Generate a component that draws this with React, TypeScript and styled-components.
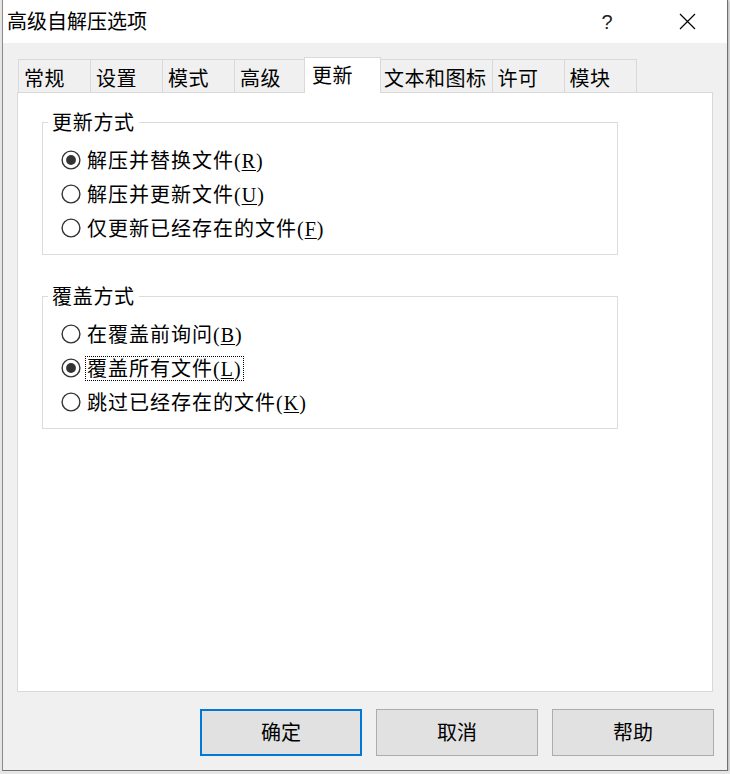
import styled, { createGlobalStyle } from 'styled-components';

const GlobalStyle = createGlobalStyle`
  body {
    margin: 0;
    background: #e6e6e6;
    font-family: 'Noto Sans CJK SC', 'Noto Sans', sans-serif;
    color: #000;
  }
`;

const tabs = ['常规', '设置', '模式', '高级', '更新', '文本和图标', '许可', '模块'];
const activeTab = '更新';

type Option = { text: string; key: string; checked?: boolean; focused?: boolean };

const groups: { title: string; options: Option[] }[] = [
  {
    title: '更新方式',
    options: [
      { text: '解压并替换文件', key: 'R', checked: true },
      { text: '解压并更新文件', key: 'U' },
      { text: '仅更新已经存在的文件', key: 'F' },
    ],
  },
  {
    title: '覆盖方式',
    options: [
      { text: '在覆盖前询问', key: 'B' },
      { text: '覆盖所有文件', key: 'L', checked: true, focused: true },
      { text: '跳过已经存在的文件', key: 'K' },
    ],
  },
];

const RadioMark = ({ checked }: { checked?: boolean }) => (
  <RadioSvg viewBox="0 0 20 20" width="20" height="20">
    <circle cx="10" cy="10" r="8.9" fill="#fff" stroke="#333" strokeWidth="1.4" />
    {checked && <circle cx="10" cy="10" r="4.9" fill="#333" />}
  </RadioSvg>
);

const App = () => {
  return (
    <>
      <GlobalStyle />
      <Window>
        <TitleBar>
          <Title>高级自解压选项</Title>
          <CaptionButton>
            <Help>?</Help>
          </CaptionButton>
          <CaptionButton>
            <svg width="17" height="17" viewBox="0 0 17 17">
              <path d="M1 1 L16 16 M16 1 L1 16" stroke="#000" strokeWidth="1.2" fill="none" />
            </svg>
          </CaptionButton>
        </TitleBar>
        <Body>
          <TabStrip>
            {tabs.map((t) => (
              <Tab key={t} $active={t === activeTab}>
                {t}
              </Tab>
            ))}
          </TabStrip>
          <Panel>
            {groups.map((g) => (
              <Group key={g.title}>
                <Legend>{g.title}</Legend>
                <RadioList>
                  {g.options.map((o) => (
                    <RadioRow key={o.key}>
                      <RadioMark checked={o.checked} />
                      <RadioLabel $focused={o.focused}>
                        {o.text}
                        <Latin>
                          (<u>{o.key}</u>)
                        </Latin>
                      </RadioLabel>
                    </RadioRow>
                  ))}
                </RadioList>
              </Group>
            ))}
          </Panel>
          <ButtonRow>
            <Button $default>确定</Button>
            <Button>取消</Button>
            <Button>帮助</Button>
          </ButtonRow>
        </Body>
      </Window>
    </>
  );
};

const Window = styled.div`
  box-sizing: border-box;
  width: 726px;
  height: 771px;
  margin-left: 2px;
  border: 1px solid #8c8c8c;
  border-top: none;
  border-right-color: #6f6f6f;
  border-bottom-color: #6f6f6f;
  background: #f0f0f0;
  display: flex;
  flex-direction: column;
  box-shadow: 1px 1px 2px rgba(0, 0, 0, 0.2);
`;

const TitleBar = styled.div`
  height: 43px;
  background: #fff;
  display: flex;
  align-items: center;
`;

const Title = styled.div`
  flex: 1;
  padding-left: 4px;
  font-size: 20px;
  line-height: 24px;
  padding-bottom: 1px;
`;

const CaptionButton = styled.div`
  width: 80px;
  height: 43px;
  display: flex;
  align-items: center;
  justify-content: center;
`;

const Help = styled.span`
  font-family: 'Liberation Sans', Arial, sans-serif;
  font-size: 20px;
  line-height: 20px;
  color: #222;
`;

const Body = styled.div`
  flex: 1;
  display: flex;
  flex-direction: column;
  padding: 14px 11px 14px 14px;
`;

const TabStrip = styled.div`
  display: flex;
  align-items: flex-end;
  height: 35px;
  padding-left: 1px;
`;

const Tab = styled.div<{ $active?: boolean }>`
  box-sizing: border-box;
  min-width: ${({ $active }) => ($active ? '77px' : '73px')};
  height: ${({ $active }) => ($active ? '36px' : '33px')};
  margin-left: ${({ $active }) => ($active ? '-3px' : '-1px')};
  margin-right: ${({ $active }) => ($active ? '-2px' : '0')};
  margin-bottom: ${({ $active }) => ($active ? '-1px' : '0')};
  padding: ${({ $active }) => ($active ? '0 5px 2px 7px' : '2px 5px 0 5px')};
  border: 1px solid #d9d9d9;
  border-bottom: none;
  background: ${({ $active }) => ($active ? '#fff' : '#f0f0f0')};
  position: relative;
  z-index: ${({ $active }) => ($active ? 1 : 0)};
  display: flex;
  align-items: center;
  font-size: 20px;
  letter-spacing: 0.5px;
  white-space: nowrap;
  &:first-child {
    margin-left: 0;
  }
`;

const Panel = styled.div`
  box-sizing: border-box;
  width: 696px;
  height: 600px;
  border: 1px solid #d9d9d9;
  background: #fff;
  padding: 19px 0 0 24px;
  display: flex;
  flex-direction: column;
  gap: 31px;
`;

const Group = styled.fieldset`
  box-sizing: border-box;
  width: 576px;
  margin: 0;
  padding: 11px 0 9px 5px;
  border: 1px solid #dcdcdc;
  min-width: 0;
`;

const Legend = styled.legend`
  padding: 0 4px;
  margin: 0;
  font-size: 20px;
  line-height: 20px;
  letter-spacing: 0.7px;
`;

const RadioList = styled.div`
  display: flex;
  flex-direction: column;
  padding-left: 13px;
`;

const RadioRow = styled.div`
  height: 34px;
  display: flex;
  align-items: center;
`;

const RadioSvg = styled.svg`
  flex: none;
  width: 20px;
  height: 20px;
`;

const RadioLabel = styled.span<{ $focused?: boolean }>`
  margin-left: 4px;
  padding: 0 1px;
  border: 1px dotted ${({ $focused }) => ($focused ? '#000' : 'transparent')};
  font-size: 20px;
  line-height: 21px;
  letter-spacing: 1px;
  white-space: nowrap;
`;

const Latin = styled.span`
  font-family: 'Liberation Serif', 'Noto Sans CJK SC', serif;
  u {
    text-underline-offset: 2px;
    text-decoration-thickness: 1px;
  }
`;

const ButtonRow = styled.div`
  display: flex;
  justify-content: flex-end;
  gap: 14px;
  padding: 17px 2px 0 0;
`;

const Button = styled.button<{ $default?: boolean }>`
  box-sizing: border-box;
  width: 162px;
  height: 47px;
  background: #e1e1e1;
  border: ${({ $default }) => ($default ? '2px solid #0078d7' : '1px solid #adadad')};
  border-radius: 0;
  font-family: 'Noto Sans CJK SC', sans-serif;
  font-size: 20px;
  line-height: 24px;
  color: #000;
  padding: 0 0 2px;
`;

export default App;
